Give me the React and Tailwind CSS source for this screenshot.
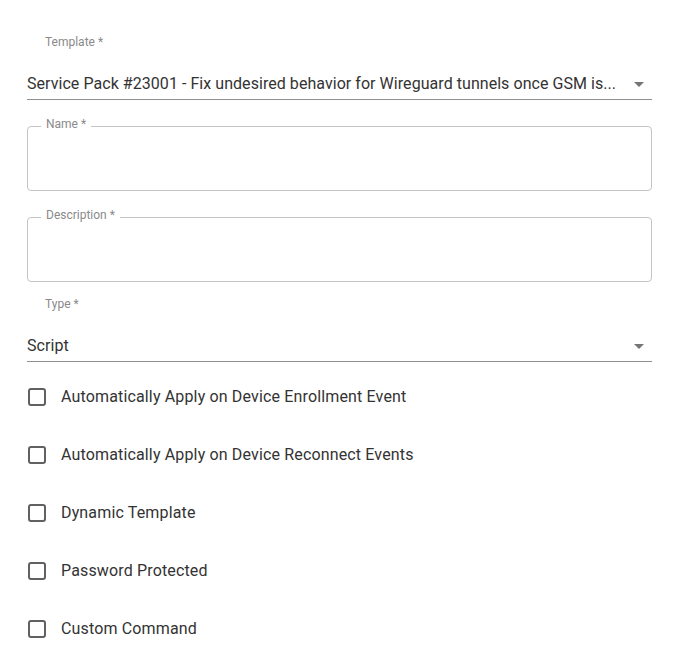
import React from 'react';

const font = { fontFamily: 'Roboto, "Noto Sans", sans-serif' };

const Arrow = () => (
    <svg width="10" height="5" viewBox="0 0 10 5" className="shrink-0">
        <path d="M0 0h10L5 5z" fill="#757575" />
    </svg>
);

const SelectField = ({ label, value }) => (
    <div>
        <div className="pl-[18px] text-[12px] leading-4 text-[#8a8a8a]">{label}</div>
        <div className="flex items-center pt-[22px] pb-[3px] pr-2 border-b border-[#8f8f8f]">
            <span className="flex-1 whitespace-nowrap text-[16px] leading-6 tracking-[0.05px] text-[#333]">{value}</span>
            <span className="ml-2"><Arrow /></span>
        </div>
    </div>
);

const OutlinedField = ({ label, className }) => (
    <div className={`relative h-[65px] rounded-[4px] border border-[#c4c4c4] ${className}`}>
        <span className="absolute left-[13px] -top-[11px] bg-white px-[5px] text-[12px] leading-4 text-[#8a8a8a]">
            {label}
        </span>
    </div>
);

const Check = ({ label }) => (
    <label className="flex h-[58px] items-center">
        <span className="ml-[1px] h-[18px] w-[18px] rounded-[3px] border-2 border-[#616161]"></span>
        <span className="ml-[15px] text-[16px] tracking-[0.15px] text-[#333]">{label}</span>
    </label>
);

export default function App() {
    return (
        <div className="min-h-screen bg-white pt-[34px] pl-[27px] pr-[41px]" style={font}>
            <SelectField
                label="Template *"
                value="Service Pack #23001 - Fix undesired behavior for Wireguard tunnels once GSM is..."
            />
            <OutlinedField label="Name *" className="mt-[26px]" />
            <OutlinedField label="Description *" className="mt-[26px]" />
            <div className="mt-[14px]">
                <SelectField label="Type *" value="Script" />
            </div>
            <div className="mt-[6px]">
                <Check label="Automatically Apply on Device Enrollment Event" />
                <Check label="Automatically Apply on Device Reconnect Events" />
                <Check label="Dynamic Template" />
                <Check label="Password Protected" />
                <Check label="Custom Command" />
            </div>
        </div>
    );
}
